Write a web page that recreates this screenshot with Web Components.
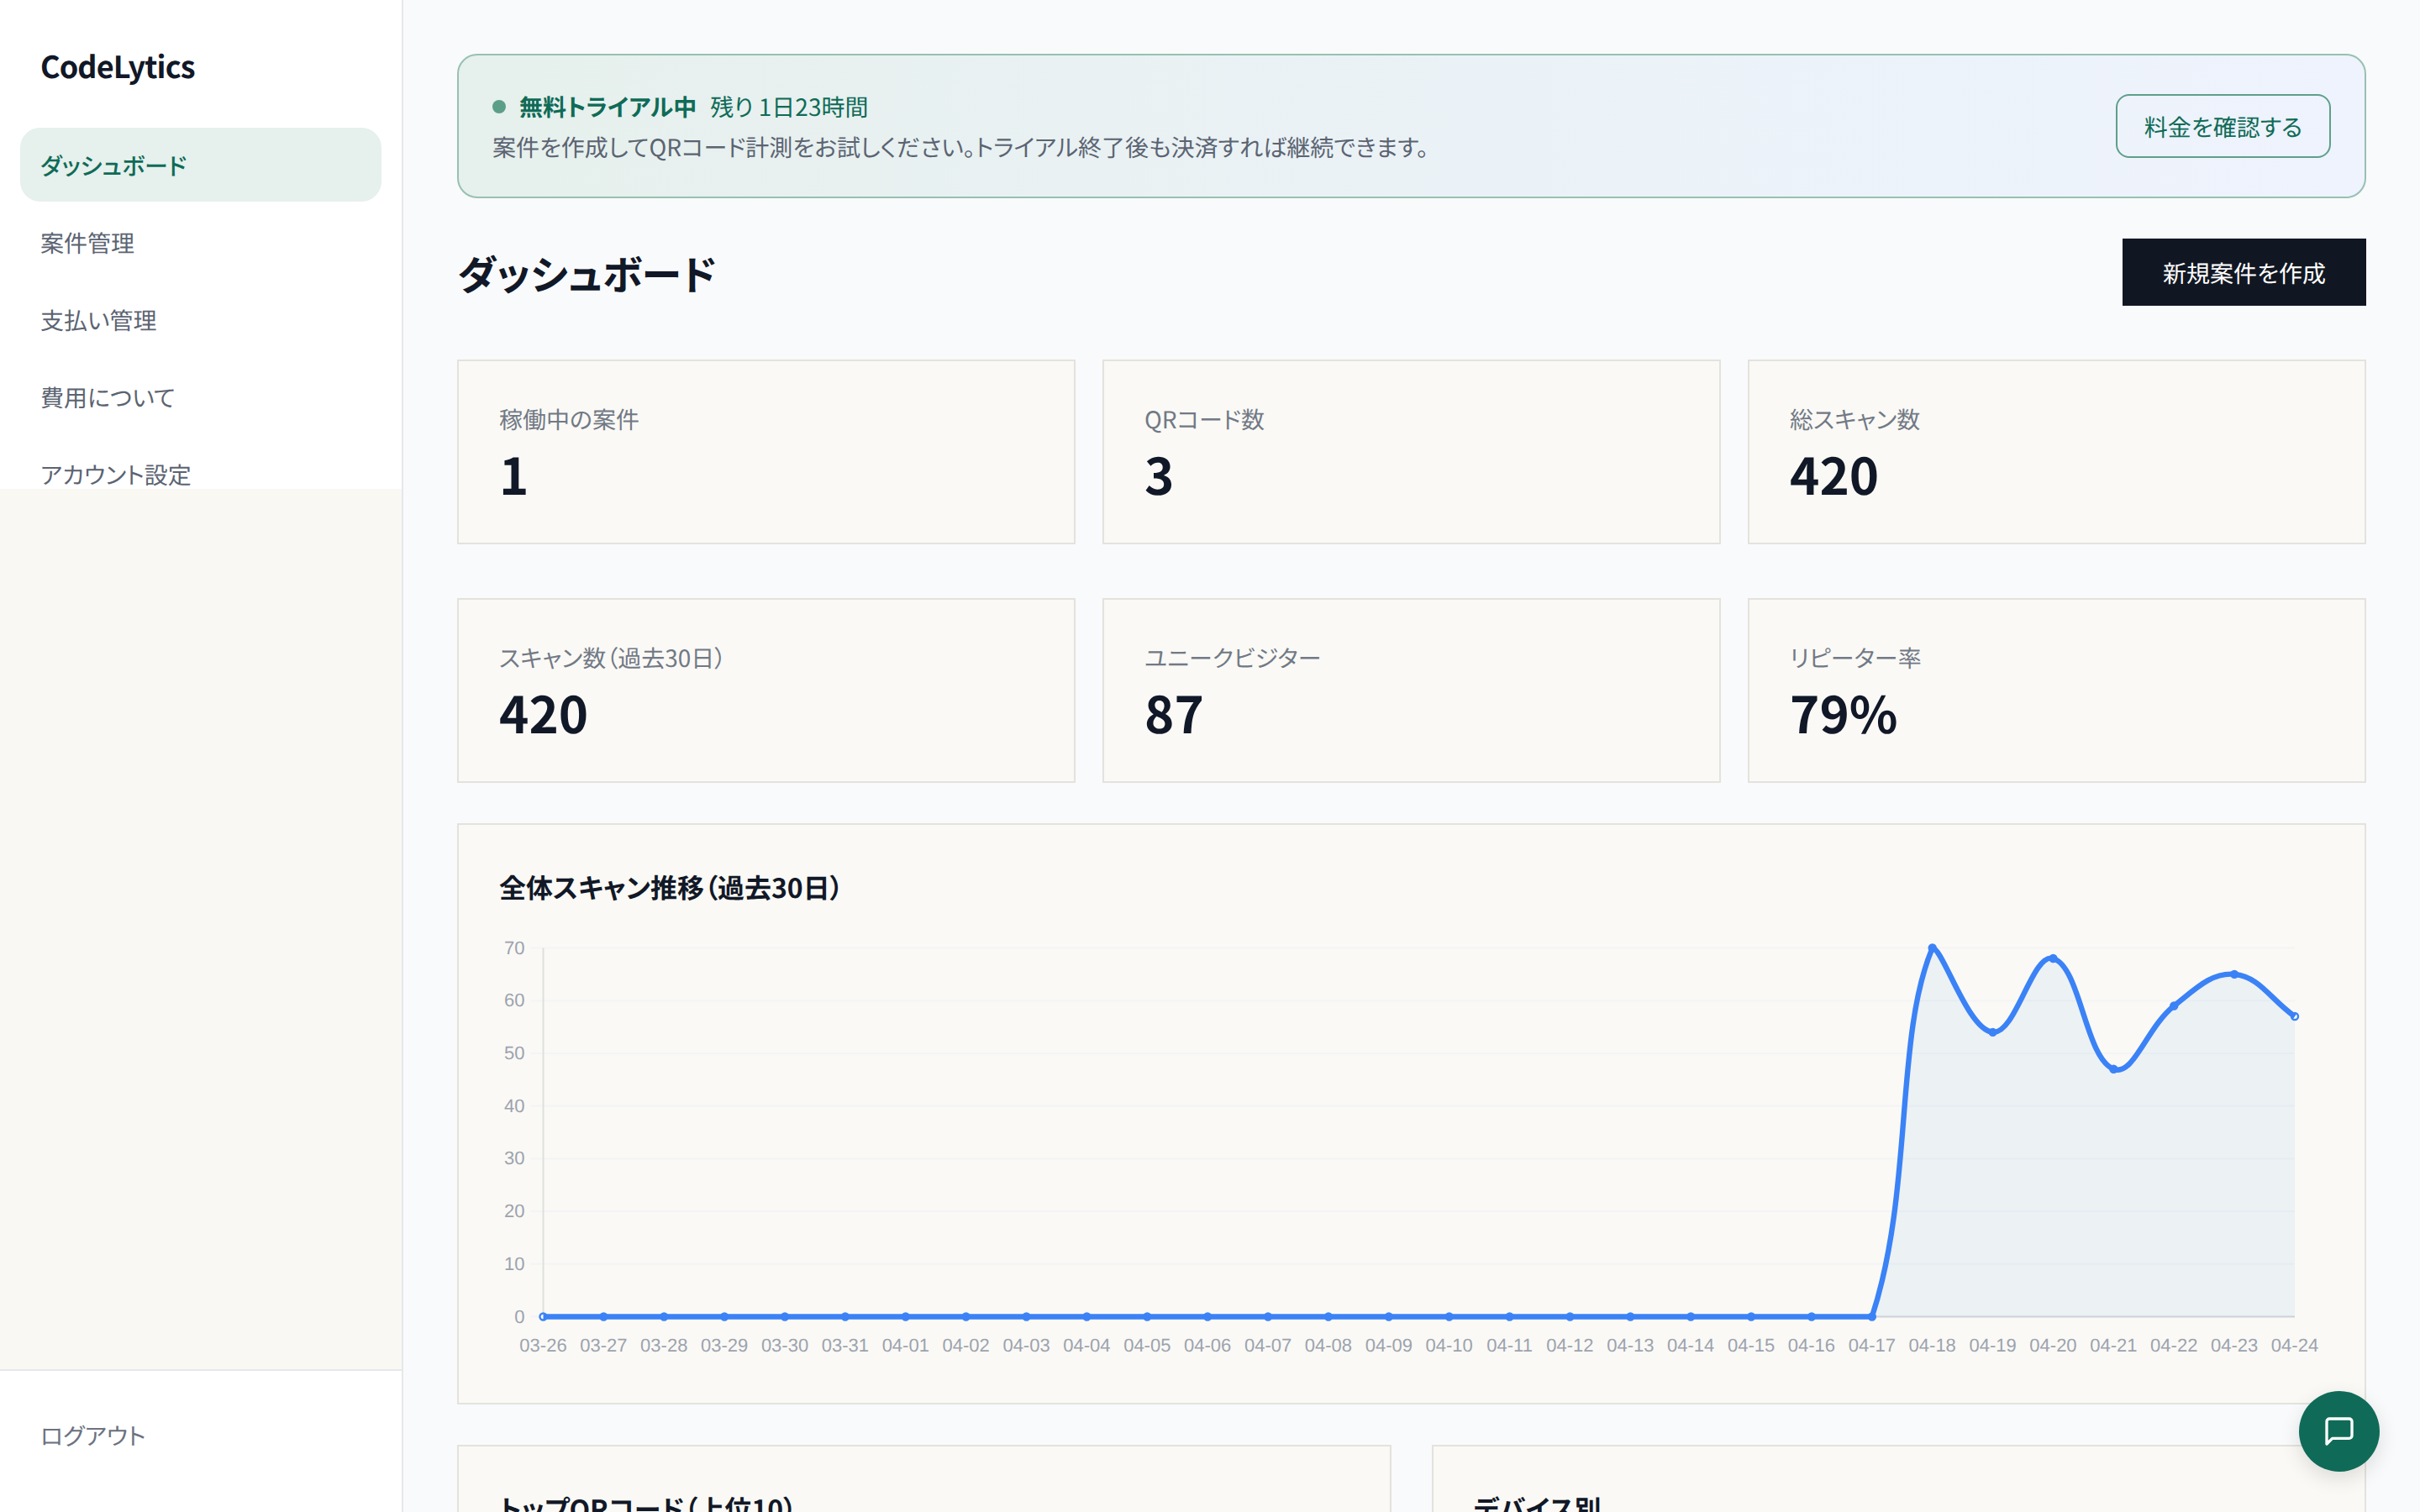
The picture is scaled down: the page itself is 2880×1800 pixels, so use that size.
<!DOCTYPE html>
<html lang="ja">
<head>
<meta charset="utf-8">
<title>CodeLytics</title>
<style>
  html, body { margin: 0; height: 100%; }
  body {
    background: #f9fafb;
    color: #111827;
    font-family: "Noto Sans CJK JP", "Noto Sans", sans-serif;
    font-feature-settings: "palt";
    text-rendering: geometricPrecision;
    overflow: hidden;
  }
</style>
</head>
<body>
<cl-app>
  <cl-sidebar slot="side" brand="CodeLytics">
    <cl-nav-item active>ダッシュボード</cl-nav-item>
    <cl-nav-item>案件管理</cl-nav-item>
    <cl-nav-item>支払い管理</cl-nav-item>
    <cl-nav-item>費用について</cl-nav-item>
    <cl-nav-item>アカウント設定</cl-nav-item>
    <cl-nav-item slot="footer" muted>ログアウト</cl-nav-item>
  </cl-sidebar>

  <cl-trial-banner title-text="無料トライアル中" remain="残り 1日23時間" action="料金を確認する">案件を作成してQRコード計測をお試しください。トライアル終了後も決済すれば継続できます。</cl-trial-banner>
  <cl-page-header heading="ダッシュボード" action="新規案件を作成"></cl-page-header>

  <cl-stat-grid>
    <cl-stat-card label="稼働中の案件" value="1"></cl-stat-card>
    <cl-stat-card label="QRコード数" value="3"></cl-stat-card>
    <cl-stat-card label="総スキャン数" value="420"></cl-stat-card>
  </cl-stat-grid>
  <cl-stat-grid>
    <cl-stat-card label="スキャン数（過去30日）" value="420"></cl-stat-card>
    <cl-stat-card label="ユニークビジター" value="87"></cl-stat-card>
    <cl-stat-card label="リピーター率" value="79%"></cl-stat-card>
  </cl-stat-grid>

  <cl-panel heading="全体スキャン推移（過去30日）"><cl-scan-chart></cl-scan-chart></cl-panel>

  <cl-panel-row>
    <cl-panel heading="トップQRコード（上位10）"></cl-panel>
    <cl-panel heading="デバイス別"></cl-panel>
  </cl-panel-row>

  <cl-fab slot="overlay"></cl-fab>
</cl-app>

<script>
function def(name, html, init) {
  customElements.define(name, class extends HTMLElement {
    constructor() {
      super();
      const root = this.attachShadow({ mode: 'open' });
      root.innerHTML = typeof html === 'function' ? html(this) : html;
    }
    connectedCallback() {
      const a = (n) => this.getAttribute(n) || '';
      this.shadowRoot.querySelectorAll('[data-text]').forEach(el => { el.textContent = a(el.dataset.text); });
      if (init) init(this, this.shadowRoot);
    }
  });
}

def('cl-app', `
<style>
  :host { display: flex; height: 1800px; position: relative; overflow: hidden; }
  main { flex: 1; min-width: 0; box-sizing: border-box; padding: 64px 64px 0; display: flex; flex-direction: column; overflow: hidden; }
</style>
<slot name="side"></slot>
<main><slot></slot></main>
<slot name="overlay"></slot>`);

def('cl-sidebar', `
<style>
  :host { display: flex; flex-direction: column; flex: none; box-sizing: border-box; width: 480px; height: 1800px; background: #f9f8f3; border-right: 2px solid #e5e7eb; }
  .top { background: #fff; height: 582px; overflow: hidden; flex: none; }
  .brand { padding: 48px 48px 0; height: 104px; box-sizing: border-box; font-size: 36px; line-height: 60px; font-weight: 700; letter-spacing: -0.9px; color: #111827; }
  nav { display: flex; flex-direction: column; gap: 4px; padding: 0 24px; margin-top: 48px; }
  .fill { flex: 1; }
  .foot { flex: none; box-sizing: border-box; height: 170px; background: #fff; border-top: 2px solid #e5e7eb; padding: 32px 24px 0; }
</style>
<div class="top">
  <div class="brand" data-text="brand"></div>
  <nav><slot></slot></nav>
</div>
<div class="fill"></div>
<div class="foot"><slot name="footer"></slot></div>`);

def('cl-nav-item', `
<style>
  :host { display: flex; align-items: center; box-sizing: border-box; height: 88px; padding: 2px 24px 0; border-radius: 24px; font-size: 28px; line-height: 40px; color: #5b6472; }
  :host([active]) { background: #e6f0ec; color: #0f6b57; font-weight: 500; }
  :host([muted]) { color: #6b7280; }
</style><slot></slot>`);

def('cl-trial-banner', `
<style>
  :host { display: flex; align-items: center; justify-content: space-between; flex: none; box-sizing: border-box; height: 172px; padding: 0 40px; border: 2px solid #97c1b2; border-radius: 24px; background: linear-gradient(90deg, #e6f0ec 0%, #ebf2f7 55%, #eef3fd 100%); }
  .line { display: flex; align-items: center; font-size: 28px; line-height: 44px; color: #0f6b57; }
  .dot { width: 16px; height: 16px; border-radius: 50%; background: #5c9f89; margin-right: 16px; }
  b { font-weight: 700; margin-right: 16px; }
  .desc { font-size: 28px; line-height: 40px; color: #5b6472; margin-top: 6px; }
  button { all: unset; box-sizing: border-box; display: flex; align-items: center; justify-content: center; height: 76px; width: 256px; padding-top: 2px; border: 2px solid #5f9f8a; border-radius: 16px; color: #0f6b57; font: inherit; font-size: 28px; font-weight: 400; }
</style>
<div>
  <div class="line"><span class="dot"></span><b data-text="title-text"></b><span data-text="remain"></span></div>
  <div class="desc"><slot></slot></div>
</div>
<button data-text="action"></button>`);

def('cl-page-header', `
<style>
  :host { display: flex; align-items: center; justify-content: space-between; flex: none; margin-top: 48px; margin-bottom: 64px; height: 80px; }
  h1 { margin: 0; font-size: 48px; line-height: 64px; font-weight: 700; color: #111827; }
  button { all: unset; box-sizing: border-box; display: flex; align-items: center; justify-content: center; width: 290px; height: 80px; padding-top: 2px; background: #111722; color: #fff; font: inherit; font-size: 28px; font-weight: 400; }
</style>
<h1 data-text="heading"></h1><button data-text="action"></button>`);

def('cl-stat-grid', `
<style>
  :host { display: grid; grid-template-columns: repeat(3, 1fr); gap: 32px; flex: none; margin-bottom: 64px; }
  :host(:nth-of-type(2)) { margin-bottom: 48px; }
</style><slot></slot>`);

def('cl-stat-card', `
<style>
  :host { display: block; box-sizing: border-box; height: 220px; padding: 49px 48px 47px; background: #faf9f5; border: 2px solid #e3e2dd; }
  .l { font-size: 28px; line-height: 40px; color: #727986; }
  .v { font-size: 60px; line-height: 72px; font-weight: 700; color: #111827; margin-top: 9px; }
</style>
<div class="l" data-text="label"></div><div class="v" data-text="value"></div>`);

def('cl-panel', `
<style>
  :host { display: block; flex: none; box-sizing: border-box; padding: 48px; background: #faf9f5; border: 2px solid #e3e2dd; }
  h2 { margin: 0 0 28px; font-size: 32px; line-height: 52px; font-weight: 700; color: #111827; }
</style>
<h2 data-text="heading"></h2><slot></slot>`);

def('cl-panel-row', `
<style>
  :host { display: grid; grid-template-columns: 1fr 1fr; gap: 48px; flex: none; margin-top: 48px; }
</style><slot></slot>`);

def('cl-scan-chart', `
<style>
  :host { display: block; height: 512px; }
  svg { display: block; width: 2172px; height: 512px; font-family: "Liberation Sans", Arial, sans-serif; font-size: 22px; fill: #9ca3af; font-feature-settings: normal; }
</style>
<svg viewBox="0 0 2172 512" xmlns="http://www.w3.org/2000/svg"></svg>`, (host, root) => {
  const svg = root.querySelector('svg');
  const X0 = 52.5, X1 = 2137, Y0 = 457.5, Y1 = 18.5;
  const labels = [];
  for (let d = 26; d <= 31; d++) labels.push('03-' + d);
  for (let d = 1; d <= 24; d++) labels.push('04-' + String(d).padStart(2, '0'));
  const vals = labels.map(() => 0);
  [70, 54, 68, 47, 59, 65, 57].forEach((v, i) => { vals[23 + i] = v; });
  const step = (X1 - X0) / 29;
  const pts = vals.map((v, i) => [X0 + i * step, Y0 - (Y0 - Y1) * v / 70]);

  // spline with control points capped to the plot area, tension 0.4
  const T = 0.4, n = pts.length;
  const clampY = (y) => Math.max(Y1, Math.min(Y0, y));
  const clampX = (x) => Math.max(X0, Math.min(X1, x));
  const cps = pts.map((c, i) => {
    const a = pts[Math.max(i - 1, 0)], b = pts[Math.min(i + 1, n - 1)];
    const d01 = Math.hypot(c[0] - a[0], c[1] - a[1]), d12 = Math.hypot(b[0] - c[0], b[1] - c[1]);
    const s = (d01 + d12) || 1;
    const fa = T * d01 / s, fb = T * d12 / s;
    return {
      c1: [clampX(c[0] - fa * (b[0] - a[0])), clampY(c[1] - fa * (b[1] - a[1]))],
      c2: [clampX(c[0] + fb * (b[0] - a[0])), clampY(c[1] + fb * (b[1] - a[1]))]
    };
  });
  let line = `M${pts[0][0]},${pts[0][1]}`;
  for (let i = 1; i < n; i++) {
    line += `C${cps[i - 1].c2[0]},${cps[i - 1].c2[1]} ${cps[i].c1[0]},${cps[i].c1[1]} ${pts[i][0]},${pts[i][1]}`;
  }
  let out = '';
  for (let v = 0; v <= 70; v += 10) {
    const y = Y0 - (Y0 - Y1) * v / 70;
    out += `<line x1="${X0 - 15}" x2="${X1}" y1="${y}" y2="${y}" stroke="#f3f4f6" stroke-width="2"/>`;
    out += `<text x="${X0 - 22}" y="${y + 7}" text-anchor="end">${v}</text>`;
  }
  out += `<line x1="${X0}" x2="${X0}" y1="${Y1}" y2="${Y0}" stroke="#dfdfdc" stroke-width="2"/>`;
  out += `<line x1="${X0}" x2="${X1}" y1="${Y0}" y2="${Y0}" stroke="#d1d5db" stroke-width="2"/>`;
  out += `<path d="${line}L${X1},${Y0}L${X0},${Y0}Z" fill="#3b88dc" fill-opacity="0.07"/>`;
  pts.forEach(p => { out += `<circle cx="${p[0]}" cy="${p[1]}" r="4" fill="#fff" stroke="#3b82f6" stroke-width="2.4"/>`; });
  out += `<path d="${line}" fill="none" stroke="#3b82f6" stroke-width="6.4"/>`;
  labels.forEach((l, i) => { out += `<text x="${X0 + i * step}" y="${Y0 + 41}" text-anchor="middle">${l}</text>`; });
  svg.innerHTML = out;
});

def('cl-fab', `
<style>
  :host { position: absolute; right: 48px; bottom: 48px; width: 96px; height: 96px; border-radius: 50%; background: #0f6b57; display: flex; align-items: center; justify-content: center; box-shadow: 0 8px 24px rgba(0,0,0,.12); }
  svg { width: 40px; height: 40px; fill: none; stroke: #fff; stroke-width: 2; stroke-linecap: round; stroke-linejoin: round; }
</style>
<svg viewBox="0 0 24 24" xmlns="http://www.w3.org/2000/svg"><path d="M21 15a2 2 0 0 1-2 2H7l-4 4V5a2 2 0 0 1 2-2h14a2 2 0 0 1 2 2z"/></svg>`);
</script>
</body>
</html>
